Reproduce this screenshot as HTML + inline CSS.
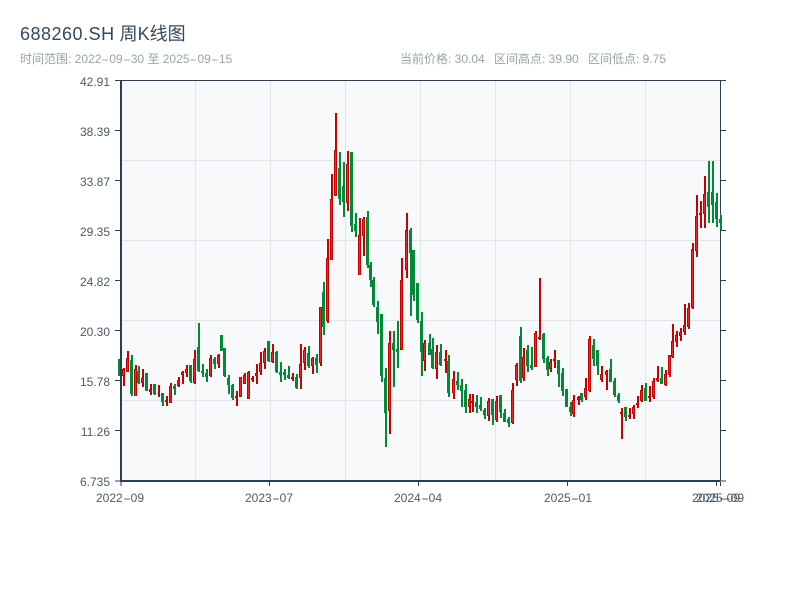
<!DOCTYPE html>
<html lang="zh">
<head>
<meta charset="utf-8">
<title>688260.SH 周K线图</title>
<style>
html,body{margin:0;padding:0;background:#fff;width:800px;height:600px;overflow:hidden}
body{position:relative;font-family:"Liberation Sans","Noto Sans CJK SC",sans-serif}
.t{position:absolute;white-space:nowrap}
.title{left:20px;top:23px;font-size:18px;line-height:22px;color:#34495e}
.title b{font-weight:normal;letter-spacing:.5px}
.sub{top:52px;font-size:12px;line-height:14px;color:#95a5a6}
.tick{font-size:12px;line-height:14px;color:#4d5a68}
.y{width:60px;left:50px;text-align:right}
.x{width:80px;text-align:center;top:491px}
.h{display:inline-block;width:8px;text-align:center;transform:scaleX(1.9)}
svg{position:absolute;left:0;top:0}
</style>
</head>
<body>
<svg width="800" height="600" viewBox="0 0 800 600">
<rect x="121" y="80" width="600" height="401" fill="#f8f9fa"/>
<path d="M195.5 80V481M270.5 80V481M345.5 80V481M420.5 80V481M495.5 80V481M570.5 80V481M645.5 80V481M121 160.5H720M121 240.5H720M121 320.5H720M121 400.5H720" stroke="#e1e5ea" stroke-width="1" fill="none"/>
<path d="M115 80.5H726M720.5 80V481M720 130.5h6M720 180.5h6M720 230.5h6M720 280.5h6M720 330.5h6M720 380.5h6M720 430.5h6M720 481h6" stroke="#2c3e50" stroke-width="1" fill="none"/>
<path d="M120 359V376M132 355V396M139 366V384M147 373V391M155 384V395M163 393V406M175 384V395M191 365V383M199 323V372M203 364V377M207 369V382M215 357V369M222 335V351M225 348V377M229 375V394M233 384V400M269 341V362M277 351V373M281 362V382M285 369V380M289 366V379M297 374V389M309 346V368M317 354V373M324 282V335M340 152V205M344 162V217M352 152V232M356 213V237M368 211V268M371 262V287M374 277V307M378 301V334M382 314V382M386 368V447M394 331V387M398 321V368M411 228V316M414 250V301M418 283V323M422 312V376M430 334V355M433 338V369M441 344V366M449 355V397M458 372V390M462 379V407M466 384V413M477 395V413M481 397V411M485 408V419M493 399V425M501 395V418M505 409V422M509 417V427M521 327V383M528 345V372M532 347V370M544 333V363M548 356V376M559 360V387M563 368V396M567 389V407M571 402V416M582 393V402M594 339V366M598 350V375M611 359V382M615 378V397M619 393V403M626 407V421M646 383V401M662 367V384M709 161V223M713 161V223M717 193V227M721 215V230" stroke="#008a37" stroke-width="2" fill="none"/>
<path d="M119.5 359V376M131.5 360V394M138.5 371V383M146.5 373V391M154.5 384V394M162.5 393V402M174.5 386V389M190.5 365V381M198.5 347V371M202.5 371V373M206.5 373V377M214.5 359V364M221.5 335V351M224.5 348V376M228.5 378V385M232.5 385V398M268.5 341V361M276.5 352V372M280.5 372V375M284.5 372V375M288.5 375V378M296.5 377V388M308.5 353V366M316.5 358V365M323.5 292V327M339.5 168V199M343.5 186V202M351.5 152V226M355.5 224V231M367.5 217V265M370.5 265V280M373.5 280V305M377.5 307V322M381.5 314V376M385.5 378V413M393.5 343V350M397.5 349V352M410.5 230V253M413.5 250V295M417.5 283V320M421.5 321V352M429.5 343V355M432.5 349V368M440.5 352V365M448.5 361V393M457.5 381V385M461.5 385V391M465.5 390V407M476.5 402V407M480.5 405V409M484.5 410V415M492.5 399V415M500.5 395V412M504.5 413V422M508.5 419V423M520.5 336V381M527.5 350V366M531.5 365V368M543.5 334V359M547.5 358V370M558.5 360V374M562.5 373V391M566.5 389V407M570.5 407V412M581.5 393V400M593.5 345V359M597.5 350V366M610.5 369V382M614.5 381V395M618.5 395V401M625.5 407V417M645.5 388V401M661.5 378V384M708.5 192V207M712.5 192V205M716.5 202V219M720.5 219V223" stroke="#008a37" stroke-width="3" fill="none"/>
<path d="M124 368V386M128 351V372M136 365V396M143 369V387M151 384V395M159 385V397M167 396V406M171 383V403M179 377V387M183 371V384M187 365V377M195 350V384M211 355V377M219 354V368M237 391V406M241 377V397M245 373V384M249 371V399M253 376V382M257 364V384M261 352V375M265 348V369M273 344V363M293 373V381M301 344V389M305 347V370M313 357V374M321 307V366M328 239V323M332 174V260M336 113V196M348 151V211M360 218V275M364 217V256M390 331V434M402 258V350M407 213V278M425 340V371M437 345V379M446 350V373M454 371V399M470 394V413M473 394V412M489 398V421M497 396V422M513 383V424M517 363V386M524 348V381M536 331V367M540 278V340M551 359V372M555 350V368M574 395V417M579 396V405M586 378V400M590 336V392M602 366V382M607 370V390M622 408V439M630 408V419M634 405V419M638 396V408M642 385V402M650 386V402M654 378V399M658 366V382M666 370V386M670 355V377M673 324V358M677 331V347M681 328V341M685 304V335M689 303V329M693 243V309M697 195V257M701 201V228M705 176V228" stroke="#c80000" stroke-width="2" fill="none"/>
<path d="M122.5 369.5h2V375.5h-2zM126.5 358.5h2V371.5h-2zM134.5 369.5h2V395.5h-2zM141.5 378.5h2V382.5h-2zM149.5 389.5h2V391.5h-2zM157.5 393.5h2V393.5h-2zM165.5 400.5h2V401.5h-2zM169.5 386.5h2V402.5h-2zM177.5 380.5h2V385.5h-2zM181.5 372.5h2V374.5h-2zM185.5 369.5h2V372.5h-2zM193.5 359.5h2V382.5h-2zM209.5 358.5h2V375.5h-2zM217.5 355.5h2V363.5h-2zM235.5 396.5h2V397.5h-2zM239.5 377.5h2V396.5h-2zM243.5 375.5h2V383.5h-2zM247.5 372.5h2V398.5h-2zM251.5 378.5h2V379.5h-2zM255.5 373.5h2V375.5h-2zM259.5 363.5h2V371.5h-2zM263.5 351.5h2V362.5h-2zM271.5 352.5h2V361.5h-2zM291.5 377.5h2V378.5h-2zM299.5 364.5h2V377.5h-2zM303.5 350.5h2V362.5h-2zM311.5 358.5h2V365.5h-2zM319.5 307.5h2V362.5h-2zM326.5 258.5h2V320.5h-2zM330.5 199.5h2V259.5h-2zM334.5 150.5h2V195.5h-2zM346.5 164.5h2V202.5h-2zM358.5 235.5h2V274.5h-2zM362.5 219.5h2V235.5h-2zM388.5 343.5h2V410.5h-2zM400.5 280.5h2V349.5h-2zM405.5 230.5h2V269.5h-2zM423.5 343.5h2V360.5h-2zM435.5 352.5h2V368.5h-2zM444.5 359.5h2V360.5h-2zM452.5 379.5h2V392.5h-2zM468.5 399.5h2V406.5h-2zM471.5 401.5h2V402.5h-2zM487.5 401.5h2V415.5h-2zM495.5 401.5h2V419.5h-2zM511.5 390.5h2V422.5h-2zM515.5 365.5h2V379.5h-2zM522.5 357.5h2V377.5h-2zM534.5 333.5h2V366.5h-2zM538.5 337.5h2V338.5h-2zM549.5 362.5h2V368.5h-2zM553.5 359.5h2V360.5h-2zM572.5 400.5h2V413.5h-2zM577.5 397.5h2V399.5h-2zM584.5 388.5h2V396.5h-2zM588.5 339.5h2V390.5h-2zM600.5 374.5h2V379.5h-2zM605.5 371.5h2V374.5h-2zM620.5 412.5h2V413.5h-2zM628.5 415.5h2V416.5h-2zM632.5 407.5h2V413.5h-2zM636.5 403.5h2V404.5h-2zM640.5 390.5h2V400.5h-2zM648.5 396.5h2V397.5h-2zM652.5 381.5h2V396.5h-2zM656.5 378.5h2V380.5h-2zM664.5 374.5h2V384.5h-2zM668.5 355.5h2V374.5h-2zM671.5 341.5h2V356.5h-2zM675.5 335.5h2V341.5h-2zM679.5 332.5h2V335.5h-2zM683.5 325.5h2V331.5h-2zM687.5 308.5h2V326.5h-2zM691.5 249.5h2V307.5h-2zM695.5 216.5h2V250.5h-2zM699.5 213.5h2V214.5h-2zM703.5 194.5h2V213.5h-2z" fill="#f52222" stroke="#c80000" stroke-width="1"/>
<path d="M121 80V482M120 481H720" stroke="#2c3e50" stroke-width="2" fill="none"/>
<path d="M115 130.5h5M115 180.5h5M115 230.5h5M115 280.5h5M115 330.5h5M115 380.5h5M115 430.5h5M115 481h5M269.5 482v4M418.5 482v4M567.5 482v4M716.5 482v4M720.5 482v4M121 482v4" stroke="#2c3e50" stroke-width="1" fill="none"/>
</svg>

<div class="t title"><b>688260.SH</b> 周K线图</div>
<div class="t sub" style="left:20px">时间范围: 2022<span class="h">-</span>09<span class="h">-</span>30 至 2025<span class="h">-</span>09<span class="h">-</span>15</div>
<div class="t sub" style="left:400px">当前价格: 30.04</div>
<div class="t sub" style="left:494px">区间高点: 39.90</div>
<div class="t sub" style="left:588px">区间低点: 9.75</div>

<div class="t tick y" style="top:75px">42.91</div>
<div class="t tick y" style="top:125px">38.39</div>
<div class="t tick y" style="top:175px">33.87</div>
<div class="t tick y" style="top:225px">29.35</div>
<div class="t tick y" style="top:275px">24.82</div>
<div class="t tick y" style="top:325px">20.30</div>
<div class="t tick y" style="top:375px">15.78</div>
<div class="t tick y" style="top:425px">11.26</div>
<div class="t tick y" style="top:475px">6.735</div>

<div class="t tick x" style="left:80px">2022<span class="h">-</span>09</div>
<div class="t tick x" style="left:229px">2023<span class="h">-</span>07</div>
<div class="t tick x" style="left:378px">2024<span class="h">-</span>04</div>
<div class="t tick x" style="left:528px">2025<span class="h">-</span>01</div>
<div class="t tick x" style="left:676px">2025<span class="h">-</span>09</div>
<div class="t tick x" style="left:680px">2025<span class="h">-</span>09</div>
</body>
</html>
